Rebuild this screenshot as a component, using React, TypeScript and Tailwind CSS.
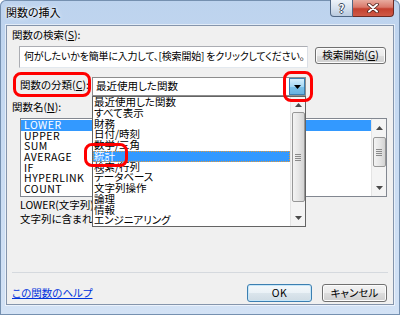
import React from "react";

function UpArrow() {
  return (
    <svg width="7" height="4" viewBox="0 0 7 4">
      <path d="M0 4 L3.5 0 L7 4Z" fill="#4a4a4a" />
    </svg>
  );
}
function DownArrow({ color = "#4a4a4a" }: { color?: string }) {
  return (
    <svg width="7" height="4" viewBox="0 0 7 4">
      <path d="M0 0 L7 0 L3.5 4Z" fill={color} />
    </svg>
  );
}

function Thumb({ mt, h }: { mt: number; h: number }) {
  return (
    <div
      className="mx-auto w-[13px] rounded-[2px] border border-[#979797] bg-gradient-to-r from-[#f3f3f3] via-[#e6e6e6] to-[#d3d3d3] flex flex-col items-center justify-center gap-[1px]"
      style={{ marginTop: mt, height: h }}
    >
      <div className="w-[6px] h-px bg-[#8a8a8a]" />
      <div className="w-[6px] h-px bg-[#8a8a8a]" />
      <div className="w-[6px] h-px bg-[#8a8a8a]" />
      <div className="w-[6px] h-px bg-[#8a8a8a]" />
    </div>
  );
}

const funcs = ["LOWER", "UPPER", "SUM", "AVERAGE", "IF", "HYPERLINK", "COUNT"];
const cats = [
  "最近使用した関数",
  "すべて表示",
  "財務",
  "日付/時刻",
  "数学/三角",
  "統計",
  "検索/行列",
  "データベース",
  "文字列操作",
  "論理",
  "情報",
  "エンジニアリング",
];

export default function App() {
  return (
    <div className="w-[400px] h-[315px] overflow-hidden rounded-t-[6px] bg-[linear-gradient(180deg,#bdd3ee_0%,#c8dbf2_45%,#d3e2f5_100%)] shadow-[inset_0_0_0_1px_#7590b0] font-['Noto_Sans_CJK_JP',sans-serif] text-[10.5px] text-black [font-feature-settings:'palt']">
      {/* title bar */}
      <div className="h-[25px] flex items-start justify-between">
        <div className="pl-[6px] pt-[6px] leading-[13px] text-[11px] [text-shadow:0_0_5px_#ffffff,0_0_3px_#ffffff]">
          関数の挿入
        </div>
        <div className="flex mr-[6px] h-[17px]">
          <div className="w-[23px] h-[17px] rounded-bl-[4px] border border-t-0 border-[#4f6684] bg-gradient-to-b from-[#eef3f9] via-[#d6e1ee] to-[#b9cadf] flex items-center justify-center">
            <span className="text-[11px] leading-none font-bold text-white [text-shadow:1px_0_0_#3d4c62,-1px_0_0_#3d4c62,0_1px_0_#3d4c62,0_-1px_0_#3d4c62]">
              ?
            </span>
          </div>
          <div className="w-[41px] h-[17px] rounded-br-[4px] border border-l-0 border-t-0 border-[#6d2a23] bg-[linear-gradient(180deg,#e8ab9f_0%,#d9786a_45%,#c4402f_55%,#cf5a47_100%)] flex items-center justify-center">
            <svg width="12" height="10" viewBox="0 0 12 10">
              <path d="M2 1.5 L10 8.5 M10 1.5 L2 8.5" stroke="#4a1f1a" strokeWidth="3.6" strokeLinecap="round" />
              <path d="M2 1.5 L10 8.5 M10 1.5 L2 8.5" stroke="#ffffff" strokeWidth="2" strokeLinecap="round" />
            </svg>
          </div>
        </div>
      </div>

      {/* client area */}
      <div className="relative ml-[6px] w-[388px] h-[280px] border border-[#8595ac] bg-[#f0f0f0] shadow-[0_0_0_1px_rgba(255,255,255,0.55)] flex flex-col">
        <div className="h-[18px] pl-[5px] flex items-center leading-none">
          関数の検索(<span className="underline">S</span>):
        </div>

        <div className="mt-[2px] flex items-start">
          <div className="ml-[12px] w-[289px] h-[22px] bg-white border border-[#abadb3] border-r-[#dbdfe6] border-b-[#e3e9ef] pl-[4px] pt-[2px] leading-[14px] text-[10px] tracking-[-0.2px] whitespace-nowrap overflow-hidden">
            何がしたいかを簡単に入力して、[検索開始] をクリックしてください。
          </div>
          <div className="ml-[7px] mt-[1px] w-[71px] h-[17px] rounded-[3px] border border-[#707070] bg-[linear-gradient(180deg,#f2f2f2_0%,#ebebeb_50%,#dddddd_51%,#cfcfcf_100%)] shadow-[inset_0_0_0_1px_#fcfcfc] flex items-center justify-center leading-none">
            検索開始(<span className="underline">G</span>)
          </div>
        </div>

        <div className="mt-[9px] flex items-center h-[19px]">
          <div className="ml-[13px] w-[72px] leading-none -mt-[2px]">
            関数の分類(<span className="underline">C</span>):
          </div>
          <div className="relative w-[214px] h-[19px] bg-white border border-[#8d8d8d] flex items-center">
            <div className="flex-1 pl-[3px] leading-none whitespace-nowrap">最近使用した関数</div>
            <div className="w-[16px] h-[17px] border border-[#3c7fb1] bg-[linear-gradient(180deg,#d6effc_0%,#a6d8f4_50%,#7cc2ea_51%,#68b3e1_100%)] flex items-center justify-center">
              <DownArrow color="#000000" />
            </div>

            {/* dropdown list */}
            <div className="absolute left-[-1px] top-[18px] w-[214px] h-[131px] bg-white border border-[#646464] z-10 flex">
              <div className="flex-1 flex flex-col pt-0">
                {cats.map((c, i) => (
                  <div
                    key={c}
                    className={
                      i === 5
                        ? "h-[10.75px] leading-[10.75px] pl-[1px] bg-[#3399ff] text-white outline-1 outline-dotted outline-[#e29a3a] -outline-offset-1 whitespace-nowrap"
                        : "h-[10.75px] leading-[10.75px] pl-[1px] whitespace-nowrap"
                    }
                  >
                    {c}
                  </div>
                ))}
              </div>
              <div className="w-[15px] h-full bg-[#f4f4f4] border-l border-[#e4e4e4] flex flex-col">
                <div className="h-[15px] flex items-center justify-center">
                  <UpArrow />
                </div>
                <Thumb mt={0} h={90} />
                <div className="flex-1" />
                <div className="h-[16px] flex items-center justify-center">
                  <DownArrow />
                </div>
              </div>
            </div>
          </div>
        </div>

        <div className="mt-[2px] h-[18px] pl-[5px] flex items-center leading-none">
          関数名(<span className="underline">N</span>):
        </div>

        <div className="mt-[2px] ml-[13px] w-[367px] h-[79px] bg-white border border-[#828790] flex">
          <div className="flex-1 pt-[1px] flex flex-col">
            {funcs.map((f, i) => (
              <div
                key={f}
                className={
                  i === 0
                    ? "h-[10.67px] leading-[10.67px] pl-[3px] tracking-[0.5px] bg-[#3399ff] text-white"
                    : "h-[10.67px] leading-[10.67px] pl-[3px] tracking-[0.5px]"
                }
              >
                {f}
              </div>
            ))}
          </div>
          <div className="w-[15px] h-full bg-[#f4f4f4] border-l border-[#e4e4e4] flex flex-col">
            <div className="h-[17px] flex items-center justify-center">
              <UpArrow />
            </div>
            <Thumb mt={1} h={30} />
            <div className="flex-1" />
            <div className="h-[17px] flex items-center justify-center">
              <DownArrow />
            </div>
          </div>
        </div>

        <div className="mt-[1px] ml-[13px] leading-[14px] whitespace-nowrap">
          <div>LOWER(文字列)</div>
          <div>文字列に含まれる英字をすべて小文字に変換します。</div>
        </div>

        <div className="mt-[46px] ml-[5px] w-[376px] h-px bg-[#d5d9de]" />

        <div className="mt-[11px] h-[18px] flex items-start">
          <div className="ml-[5px] pt-[2px] leading-[14px] text-[#0033dd] underline">この関数のヘルプ</div>
          <div className="flex-1" />
          <div className="w-[65px] h-[18px] rounded-[3px] border border-[#3c7fb1] bg-[linear-gradient(180deg,#f4f8fb_0%,#eaf1f6_50%,#dbe5ec_51%,#cfdbe4_100%)] shadow-[inset_0_0_0_1px_#c6e6f8] flex items-center justify-center leading-none tracking-[0.5px]">
            OK
          </div>
          <div className="ml-[10px] mr-[6px] w-[65px] h-[18px] rounded-[3px] border border-[#707070] bg-[linear-gradient(180deg,#f2f2f2_0%,#ebebeb_50%,#dddddd_51%,#cfcfcf_100%)] shadow-[inset_0_0_0_1px_#fcfcfc] flex items-center justify-center leading-none">
            キャンセル
          </div>
        </div>

        {/* red annotations */}
        <div className="absolute left-[6px] top-[46px] w-[78px] h-[25px] border-[3px] border-[#ff0000] rounded-[8px] z-20" />
        <div className="absolute left-[276px] top-[45px] w-[30px] h-[31px] border-[3px] border-[#ff0000] rounded-[8px] z-20" />
        <div className="absolute left-[77px] top-[117px] w-[44px] h-[24px] border-[3px] border-[#ff0000] rounded-[8px] z-20" />
      </div>
    </div>
  );
}
